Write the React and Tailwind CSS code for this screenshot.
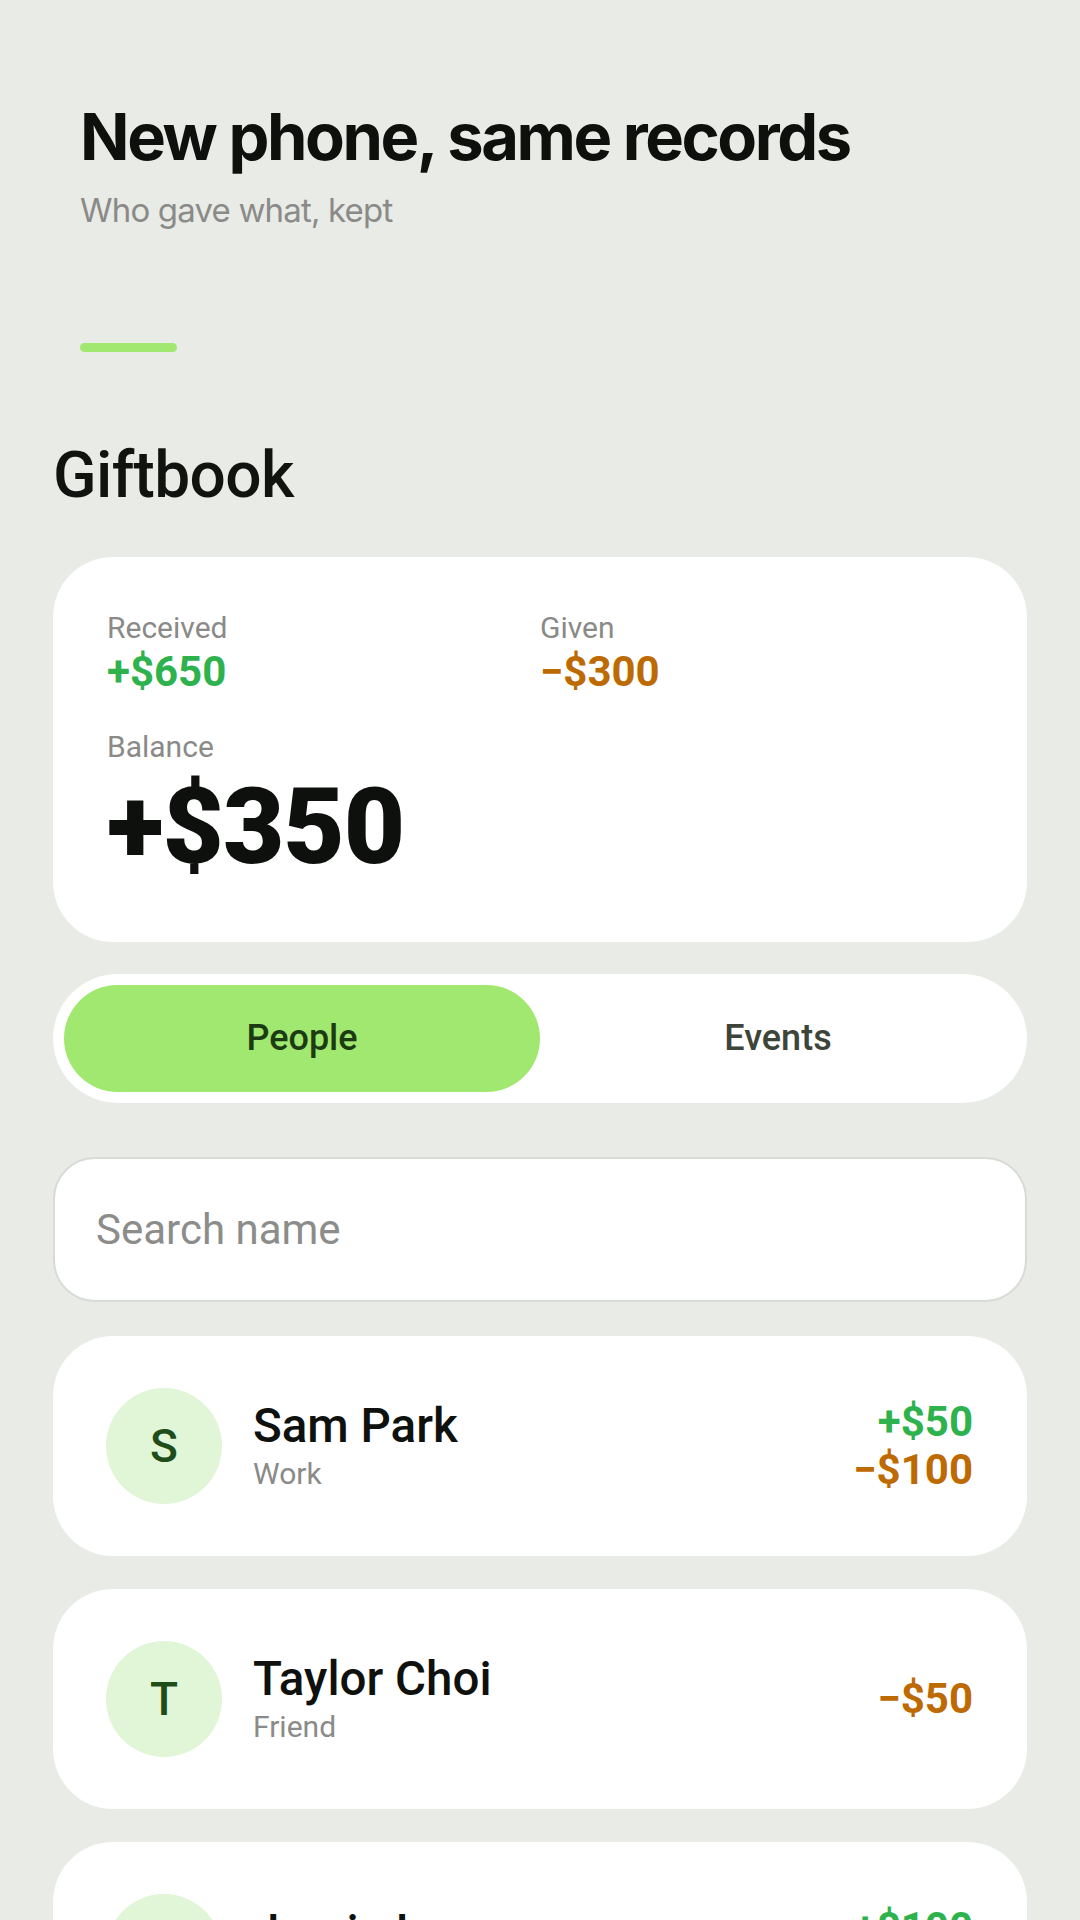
const PEOPLE = [
  { id: "sam", initial: "S", name: "Sam Park", tag: "Work", received: "+$50", given: "−$100" },
  { id: "taylor", initial: "T", name: "Taylor Choi", tag: "Friend", given: "−$50" },
  { id: "jamie", initial: "J", name: "Jamie Lee", tag: "Family", received: "+$100", given: "−$80" },
];

function PersonRow({ person }) {
  return (
    <div className="bg-white rounded-[60px] h-[220px] pl-[53px] pr-[54px] flex items-center gap-[31px] shrink-0">
      <div className="w-[116px] h-[116px] rounded-full bg-[#e1f5d7] flex items-center justify-center shrink-0">
        <span className="text-[46px] font-medium text-[#1f4d1a] leading-none">{person.initial}</span>
      </div>
      <div className="flex-1 flex flex-col">
        <p className="text-[47.5px] font-medium text-[#0f110e] leading-[1.1]">{person.name}</p>
        <p className="text-[30px] text-[#8a8a88] leading-[36px] mt-[3px]">{person.tag}</p>
      </div>
      <div className="flex flex-col items-end">
        {person.received && (
          <span className="text-[42px] font-bold text-[#2db24d] leading-[48px]">{person.received}</span>
        )}
        {person.given && (
          <span className="text-[42px] font-bold text-[#bd6a03] leading-[48px]">{person.given}</span>
        )}
      </div>
    </div>
  );
}

export default function App() {
  return (
    <div className="min-h-screen bg-[#e9ebe6] font-['Roboto','Noto_Sans',sans-serif] overflow-hidden h-[1920px]">

      {/* Intro header */}
      <div className="px-[80px] pt-[101px] font-['Inter','Noto_Sans',sans-serif]">
        <h1 className="text-[65px] font-bold leading-[1.1] tracking-[-0.037em] text-[#0e100d]">
          New phone, same records
        </h1>
        <p className="text-[33px] leading-[1.2] tracking-[-0.025em] text-[#8a8a88] mt-[18px]">
          Who gave what, kept
        </p>
        <div className="w-[97px] h-[9px] rounded-full bg-[#a0e870] mt-[113px]" />
      </div>

      <div className="px-[53px] flex flex-col">
        <h2 className="text-[64px] font-medium leading-[1.2] tracking-[-0.01em] text-[#111310] mt-[86px]">
          Giftbook
        </h2>

        {/* Summary */}
        <div className="bg-white rounded-[60px] mt-[42px] pl-[54px] pr-[54px] pt-[53px] pb-[62px]">
          <div className="grid grid-cols-2">
            <div>
              <p className="text-[30px] leading-[36px] text-[#8a8a88]">Received</p>
              <p className="text-[42px] leading-[48px] font-bold text-[#2db24d] mt-[2px]">+$650</p>
            </div>
            <div>
              <p className="text-[30px] leading-[36px] text-[#8a8a88]">Given</p>
              <p className="text-[42px] leading-[48px] font-bold text-[#bd6a03] mt-[2px]">−$300</p>
            </div>
          </div>
          <p className="text-[30px] leading-[36px] text-[#8a8a88] mt-[33px]">Balance</p>
          <p className="text-[106px] leading-none font-black tracking-[-0.01em] text-[#0e100d] mt-[9px]">+$350</p>
        </div>

        {/* Tabs */}
        <div className="bg-white rounded-full mt-[32px] p-[11px] grid grid-cols-2 h-[129px]">
          <button className="rounded-full bg-[#a0e870] text-[36px] font-medium text-[#1d3b12]">People</button>
          <button className="rounded-full text-[36px] font-medium text-[#3d4439]">Events</button>
        </div>

        {/* Search */}
        <input
          type="text"
          placeholder="Search name"
          className="mt-[54px] h-[145px] w-full bg-white border-2 border-[#d9dbd6] rounded-[42px] px-[41px] text-[42px] text-[#111] placeholder:text-[#8c8c8a] outline-none"
        />

        {/* People list */}
        <div className="flex flex-col gap-[33px] mt-[34px]">
          {PEOPLE.map((p) => (
            <PersonRow key={p.id} person={p} />
          ))}
        </div>
      </div>
    </div>
  );
}
